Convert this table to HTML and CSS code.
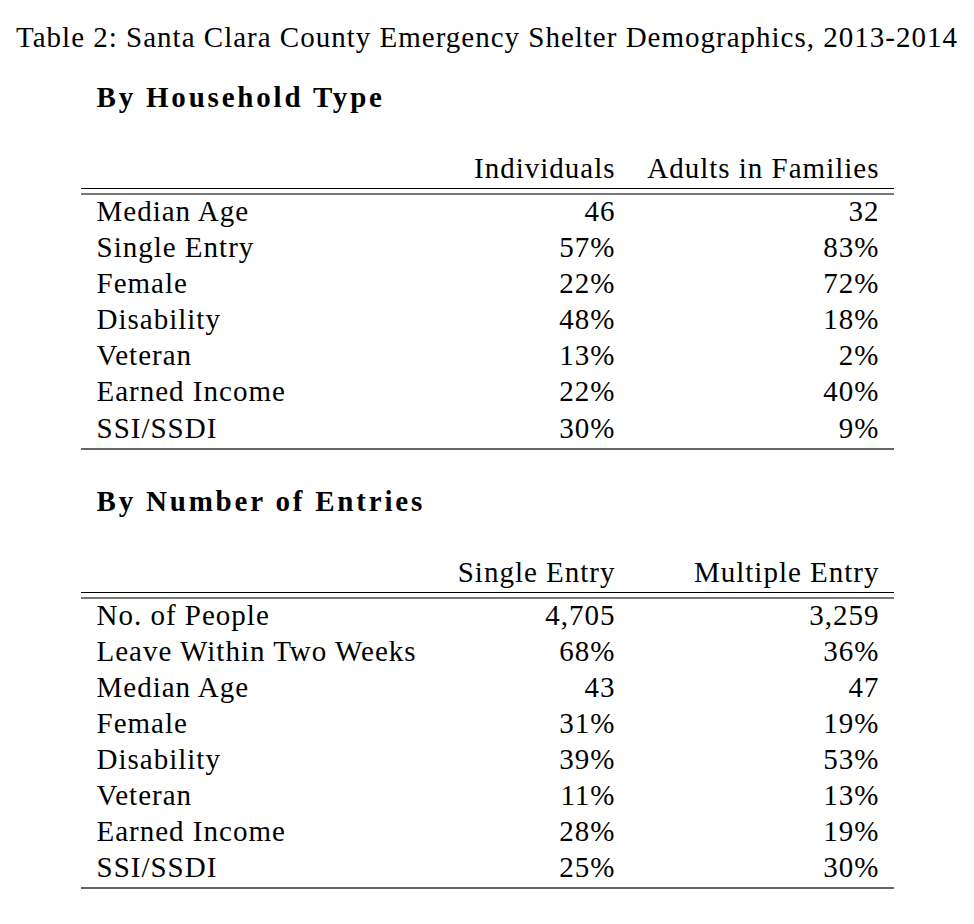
FILE: index.html
```html
<!DOCTYPE html>
<html>
<head>
<meta charset="utf-8">
<link rel="stylesheet" href="styles.css">
</head>
<body>
<div class="page">
  <div class="caption">Table 2: Santa Clara County Emergency Shelter Demographics, 2013-2014</div>
  <div class="block first">
    <div class="heading">By Household Type</div>
    <table class="tbl">
      <colgroup><col class="c0"><col class="c1"><col class="c2"></colgroup>
      <thead>
        <tr><th></th><th>Individuals</th><th>Adults in Families</th></tr>
      </thead>
      <tbody>
        <tr><td>Median Age</td><td>46</td><td>32</td></tr>
        <tr><td>Single Entry</td><td>57%</td><td>83%</td></tr>
        <tr><td>Female</td><td>22%</td><td>72%</td></tr>
        <tr><td>Disability</td><td>48%</td><td>18%</td></tr>
        <tr><td>Veteran</td><td>13%</td><td>2%</td></tr>
        <tr><td>Earned Income</td><td>22%</td><td>40%</td></tr>
        <tr><td>SSI/SSDI</td><td>30%</td><td>9%</td></tr>
      </tbody>
    </table>
  </div>
  <div class="block second">
    <div class="heading">By Number of Entries</div>
    <table class="tbl">
      <colgroup><col class="c0"><col class="c1"><col class="c2"></colgroup>
      <thead>
        <tr><th></th><th>Single Entry</th><th>Multiple Entry</th></tr>
      </thead>
      <tbody>
        <tr><td>No. of People</td><td>4,705</td><td>3,259</td></tr>
        <tr><td>Leave Within Two Weeks</td><td>68%</td><td>36%</td></tr>
        <tr><td>Median Age</td><td>43</td><td>47</td></tr>
        <tr><td>Female</td><td>31%</td><td>19%</td></tr>
        <tr><td>Disability</td><td>39%</td><td>53%</td></tr>
        <tr><td>Veteran</td><td>11%</td><td>13%</td></tr>
        <tr><td>Earned Income</td><td>28%</td><td>19%</td></tr>
        <tr><td>SSI/SSDI</td><td>25%</td><td>30%</td></tr>
      </tbody>
    </table>
  </div>
</div>
</body>
</html>
```
FILE: styles.css
```css
html, body {
  margin: 0;
  padding: 0;
  background: #fff;
}
body {
  font-family: "Liberation Serif", "Times New Roman", serif;
  color: #000;
  font-size: 29px;
  letter-spacing: 1px;
}
.page {
  width: 974px;
  padding-top: 20px;
}
.caption {
  text-align: center;
  line-height: 34px;
  white-space: nowrap;
}
.block {
  width: 813px;
  margin: 0 auto;
}
.heading {
  font-weight: bold;
  letter-spacing: 2.8px;
  padding-left: 16px;
  line-height: 36px;
  white-space: nowrap;
}
.first .heading {
  margin-top: 25px;
}
.second .heading {
  margin-top: 33px;
}
.tbl {
  width: 813px;
  table-layout: fixed;
  border-collapse: separate;
  border-spacing: 0;
}
.first .tbl {
  margin-top: 34px;
}
.second .tbl {
  margin-top: 34px;
}
.c0 { width: 358px; }
.c1 { width: 191px; }
.c2 { width: 264px; }
.tbl th, .tbl td {
  padding: 0 14px 0 16px;
  font-weight: normal;
  text-align: right;
  white-space: nowrap;
}
.tbl th:first-child, .tbl td:first-child {
  text-align: left;
}
.tbl thead th {
  line-height: 39px;
  height: 39px;
  border-bottom: 1px solid #000;
}
.tbl tbody td {
  line-height: 36.1px;
  height: 36.1px;
}
.tbl tbody tr:first-child td {
  padding-top: 4px;
  box-shadow: inset 0 4px 0 #fff, inset 0 6px 0 #777;
}
.tbl tbody tr:last-child td {
  padding-bottom: 2px;
  border-bottom: 2px solid #666;
}
```
